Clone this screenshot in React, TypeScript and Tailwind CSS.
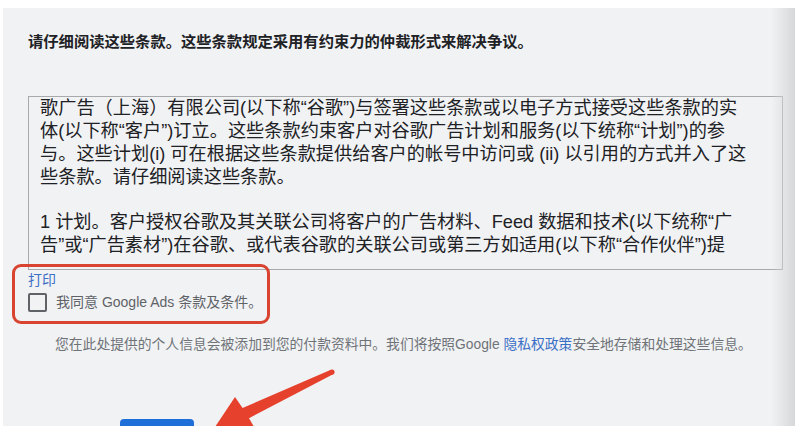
const font = { fontFamily: '"Liberation Sans", "Noto Sans CJK SC", sans-serif' };

const para1 = [
  "歌广告（上海）有限公司(以下称“谷歌”)与签署这些条款或以电子方式接受这些条款的实",
  "体(以下称“客户”)订立。这些条款约束客户对谷歌广告计划和服务(以下统称“计划”)的参",
  "与。这些计划(i) 可在根据这些条款提供给客户的帐号中访问或 (ii) 以引用的方式并入了这",
  "些条款。请仔细阅读这些条款。",
];

const para2 = [
  "1 计划。客户授权谷歌及其关联公司将客户的广告材料、Feed 数据和技术(以下统称“广",
  "告”或“广告素材”)在谷歌、或代表谷歌的关联公司或第三方如适用(以下称“合作伙伴”)提",
];

function Arrow() {
  return (
    <svg className="absolute left-0 top-0 pointer-events-none" width="800" height="426" viewBox="0 0 800 426">
      <polygon
        points="330.9,369.7 333.1,374.3 246.6,419.4 241.4,408.6"
        fill="#e5412d"
      />
      <circle cx="332" cy="372" r="2.6" fill="#e5412d" />
      <polygon points="235,397 246,413 257,432 205,442" fill="#e5412d" />
    </svg>
  );
}

export default function App() {
  return (
    <div className="relative w-[800px] h-[426px] overflow-hidden bg-white pt-[8px] pl-[3px] pr-[5px]" style={font}>
      <div className="h-full bg-[#f1f2f4] pl-[25px] pr-[12px] pt-[24px]">
        <h1 className="text-[15.3px] leading-[20px] font-semibold text-[#202124] whitespace-nowrap">
          请仔细阅读这些条款。这些条款规定采用有约束力的仲裁形式来解决争议。
        </h1>

        <div className="mt-[44px] h-[174px] overflow-hidden border border-[#a8a9ab] pl-[11px] text-[18.2px] leading-[23px] text-[#202124]">
          <div>
            {para1.map((l) => (
              <div key={l} className="whitespace-nowrap">{l}</div>
            ))}
          </div>
          <div className="mt-[22px]">
            {para2.map((l) => (
              <div key={l} className="whitespace-nowrap">{l}</div>
            ))}
          </div>
        </div>

        <div className="mt-[1px] text-[14px] leading-[18px] text-[#3d6fc4]">打印</div>
        <label className="mt-[4px] flex items-center gap-[9px]">
          <span className="w-[19px] h-[19px] rounded-[2px] border-2 border-[#5f6368]" />
          <span className="text-[14px] leading-[19px] text-[#5f6368]">我同意 Google Ads 条款及条件。</span>
        </label>

        <p className="mt-[24px] ml-[27px] text-[13.8px] leading-[18px] text-[#6f7378] whitespace-nowrap">
          您在此处提供的个人信息会被添加到您的付款资料中。我们将按照Google <span className="text-[#3a6fc6]">隐私权政策</span>安全地存储和处理这些信息。
        </p>

        <button className="mt-[65px] ml-[92px] w-[74px] h-[36px] rounded-[4px] bg-[#1f6fd8]" />
      </div>

      <div className="absolute top-[8px] right-[5px] bottom-0 w-[24px] bg-gradient-to-r from-[#f1f2f4]/0 to-[#d7d8da] pointer-events-none" />
      <div className="absolute left-[12px] top-[264px] w-[258px] h-[60px] rounded-[9px] border-[3.5px] border-[#d8442f] pointer-events-none" />
      <Arrow />
    </div>
  );
}
